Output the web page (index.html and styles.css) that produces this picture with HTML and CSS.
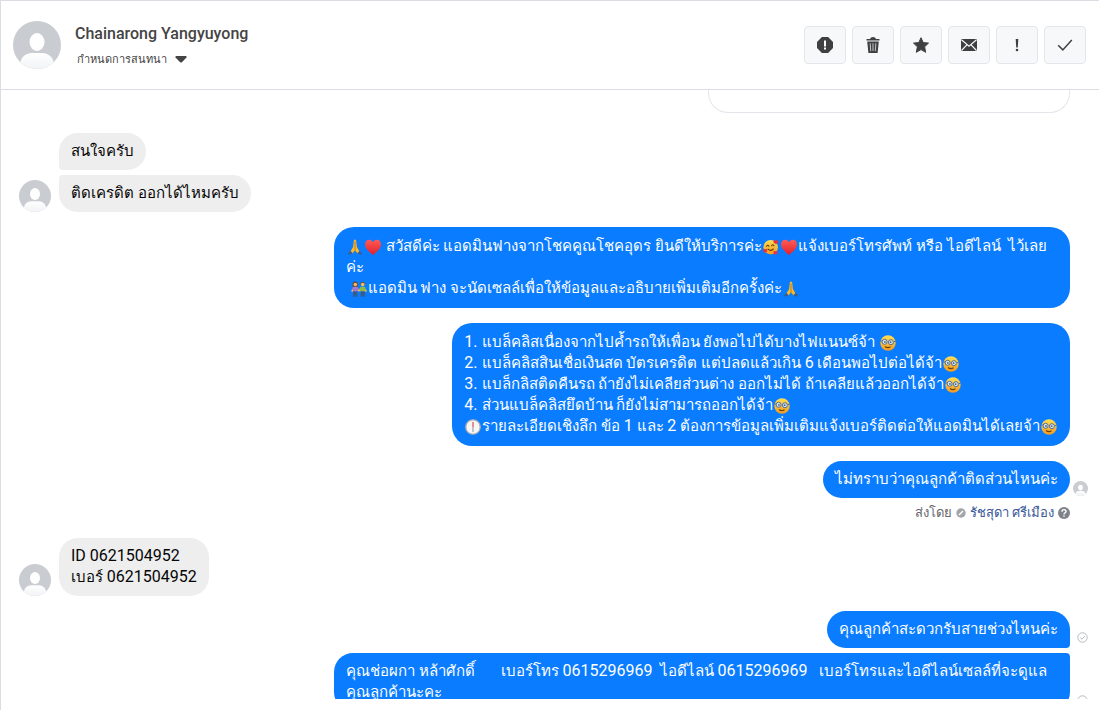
FILE: index.html
```html
<!DOCTYPE html>
<html lang="th">
<head>
    <meta charset="UTF-8">
    <meta name="viewport" content="width=device-width, initial-scale=1.0">
    <title>Chainarong Yangyuyong</title>
    <link rel="stylesheet" href="styles.css">
</head>
<body>
    <!-- Shared symbols -->
    <svg class="sprites" aria-hidden="true">
        <defs>
            <linearGradient id="shade" x1="0" y1="0" x2="0" y2="1">
                <stop offset="0" stop-color="#fff"/>
                <stop offset="1" stop-color="#f1f3f6"/>
            </linearGradient>
            <clipPath id="round"><circle cx="24" cy="24" r="24"/></clipPath>
            <linearGradient id="face" x1="0" y1="0" x2="0" y2="1">
                <stop offset="0" stop-color="#ffdf55"/>
                <stop offset="1" stop-color="#f29a1f"/>
            </linearGradient>
            <linearGradient id="red" x1="0" y1="0" x2="0" y2="1">
                <stop offset="0" stop-color="#ff5b55"/>
                <stop offset="1" stop-color="#e0202b"/>
            </linearGradient>
        </defs>
        <symbol id="person" viewBox="0 0 48 48">
            <g clip-path="url(#round)">
                <rect width="48" height="48" fill="#c9ccd1"/>
                <ellipse cx="24" cy="21" rx="7.5" ry="9" fill="#fff"/>
                <path d="M7 48v-3c0-8 5-13 12-13h10c7 0 12 5 12 13v3z" fill="url(#shade)"/>
            </g>
        </symbol>
        <symbol id="pray" viewBox="0 0 16 16">
            <path d="M8 .5c-.9 0-1.200.8-1.300 2.300L6.100 8 3.400 12.500l2 1.900L8 11.300l2.600 3.100 2-1.900L9.900 8l-.6-5.200C9.200 1.300 8.900.5 8 .5z" fill="#fbb829"/>
            <path d="M8 2.500v9" stroke="#b9791b" stroke-width=".9"/>
            <path d="M3.500 12L.8 14.300l1.600 1.500 3.400-1.500zM12.500 12l2.700 2.300-1.600 1.500-3.400-1.500z" fill="#3c5f8c"/>
        </symbol>
        <symbol id="heart" viewBox="0 0 16 16">
            <path d="M8 16C5 13.500 0 9.800 0 5.300 0 2.600 1.900.8 4.100.8 5.900.8 7.300 1.900 8 3.300 8.700 1.900 10.100.8 11.900.8 14.100.8 16 2.600 16 5.300 16 9.800 11 13.500 8 16z" fill="url(#red)"/>
        </symbol>
        <symbol id="love" viewBox="0 0 16 16">
            <circle cx="7.700" cy="8.200" r="7.300" fill="url(#face)"/>
            <path d="M3.600 7.200q1.200-1.800 2.400 0M8.600 6.700q1.200-1.800 2.400 0M5 10.200q2.700 2.500 5.300-.2" stroke="#6b3a12" stroke-width="1.100" fill="none" stroke-linecap="round"/>
            <path d="M13 5.200c-1.800-.8-2.900-1.800-2.600-3.100.3-1.100 1.600-1.300 2.300-.4.900-.9 2.300-.5 2.500.7.200 1.300-.8 2.200-2.200 2.800zM2.400 13.800C1 13-.1 12.100.1 10.900c.2-1 1.400-1.200 2-.4.800-.8 2.100-.4 2.200.6.100 1.200-.7 2-1.900 2.700zM12.600 15.800c-1.500-.8-2.500-1.700-2.200-2.900.2-1 1.400-1.200 2-.4.800-.8 2.100-.4 2.200.6.100 1.200-.8 2.100-2 2.700z" fill="#e8323c"/>
        </symbol>
        <symbol id="nerd" viewBox="0 0 16 16">
            <circle cx="8" cy="8" r="7.700" fill="url(#face)"/>
            <path d="M.5 6h1.500M14 6.500h1.500" stroke="#4f6e91" stroke-width="1"/>
            <circle cx="4.600" cy="6.800" r="2.500" fill="#dbe6f0" stroke="#4f6e91" stroke-width="1"/>
            <circle cx="10.900" cy="7.200" r="2.500" fill="#dbe6f0" stroke="#4f6e91" stroke-width="1"/>
            <circle cx="4.900" cy="6.900" r=".9" fill="#3f5f86"/>
            <circle cx="10.600" cy="7.200" r=".9" fill="#3f5f86"/>
            <path d="M5 11.500q2.800 2.200 5.500.2" stroke="#71400f" stroke-width="1.200" fill="none"/>
        </symbol>
        <symbol id="couple" viewBox="0 0 16 16">
            <path d="M1.700 6V3C1.700-.3 6.700-.3 6.700 3v3z" fill="#684326"/>
            <circle cx="4.300" cy="3.500" r="1.800" fill="#f6bd55"/>
            <path d="M9.400 3C9.400 0 14 0 14 3v1H9.400z" fill="#705032"/>
            <circle cx="11.700" cy="3.600" r="1.800" fill="#f6bd55"/>
            <path d="M2 5.700h4.600L8 8.500l-1.300 2H2L.4 9.600z" fill="#a17ac9"/>
            <path d="M9.500 5.700h4.300l1.900 3.900-1.800.9H9.500L8 8.500z" fill="#8eb94b"/>
            <path d="M7 8.800h2v1.400H7zM.5 9h1.400v1.700H.5zM14.200 9h1.400v1.700h-1.400z" fill="#f6bd55"/>
            <path d="M2.200 10.500h4v5.300H4.700l-.4-3.600-.4 3.600H2.200zM9.800 10.500h4v5.300h-1.600l-.4-3.600-.4 3.600H9.800z" fill="#40577c"/>
        </symbol>
        <symbol id="clock" viewBox="0 0 16 16">
            <circle cx="8" cy="8" r="7.200" fill="#f6f6f7" stroke="#b5b1b1" stroke-width="1.300"/>
            <path d="M8 3v5" stroke="#e45757" stroke-width="1.300"/>
            <path d="M8 8v5" stroke="#8a8f98" stroke-width="1"/>
        </symbol>
        <symbol id="sent" viewBox="0 0 11 11">
            <circle cx="5.500" cy="5.500" r="4.700" fill="none" stroke="#b7bac0" stroke-width="1"/>
            <path d="M3.300 5.700l1.600 1.500 3-3.200" fill="none" stroke="#b7bac0" stroke-width="1"/>
        </symbol>
    </svg>

    <header class="header">
        <svg class="avatar avatar-large"><use href="#person"/></svg>
        <div class="contact">
            <h1>Chainarong Yangyuyong</h1>
            <button class="assign" type="button">กำหนดการสนทนา<svg width="12" height="7" viewBox="0 0 12 7"><path d="M1 0h10q1 .5.500 1.500L6.900 6.200q-.9.800-1.800 0L.5 1.500Q0 .5 1 0z" fill="#444"/></svg></button>
        </div>
        <div class="actions">
            <button type="button" aria-label="รายงาน">
                <svg viewBox="0 0 16 16"><path d="M4.900 0h6.200L16 4.900v6.200L11.100 16H4.900L0 11.100V4.900z" fill="#3e4042"/><path d="M7 3.500h2v6H7zM7 10.600h2v2H7z" fill="#fff"/></svg>
            </button>
            <button type="button" aria-label="ลบ">
                <svg viewBox="0 0 16 16"><path d="M5 2Q5.500 0 8 0t3 2h3.500v1.500h-13V2z" fill="#3e4042"/><path d="M2.200 4.500h11.600L12.600 16H3.400z" fill="#3e4042"/><path d="M5.200 6.300l.5 7.800M8 6.300v7.800M10.800 6.300l-.5 7.800" stroke="#b9bbbd" stroke-width="1.100"/></svg>
            </button>
            <button type="button" aria-label="ติดดาว">
                <svg viewBox="0 0 16 16"><path d="M8 .7l2.200 4.900 5.300.5-3.900 3.700 1.100 5.500L8 12.600l-4.700 2.700 1.100-5.500L.5 6.100l5.300-.5z" fill="#3e4042" stroke="#3e4042" stroke-linejoin="round"/></svg>
            </button>
            <button type="button" aria-label="ยังไม่อ่าน">
                <svg viewBox="0 0 16 16"><rect y="2" width="16" height="12" rx="1" fill="#3e4042"/><path d="M.5 2.800L8 9.200l7.500-6.400M.5 13.500l5.400-5.700M15.500 13.500l-5.400-5.700" fill="none" stroke="#f7f8fa" stroke-width="1.200"/></svg>
            </button>
            <button type="button" aria-label="ติดตาม">
                <svg viewBox="0 0 16 16"><path d="M6.700 2h2.600l-.5 8.500H7.200z" fill="#3e4042"/><circle cx="8" cy="13" r="1.300" fill="#3e4042"/></svg>
            </button>
            <button type="button" aria-label="เสร็จสิ้น">
                <svg viewBox="0 0 16 16"><path d="M1.200 8.300l4.600 4.600L14.800 3" fill="none" stroke="#3e4042" stroke-width="1.500"/></svg>
            </button>
        </div>
    </header>

    <main class="thread">
        <div class="row row-out"><div class="card"></div><div class="receipt"></div></div>

        <section class="group">
            <div class="row">
                <div class="avatar"></div>
                <div class="bubble in first">สนใจครับ</div>
            </div>
            <div class="row">
                <svg class="avatar"><use href="#person"/></svg>
                <div class="bubble in last">ติดเครดิต ออกได้ไหมครับ</div>
            </div>
        </section>

        <section class="group">
            <div class="row row-out">
                <div class="bubble out long"><svg class="emoji"><use href="#pray"/></svg><svg class="emoji"><use href="#heart"/></svg> สวัสดีค่ะ แอดมินฟางจากโชคคูณโชคอุดร ยินดีให้บริการค่ะ<svg class="emoji"><use href="#love"/></svg><svg class="emoji"><use href="#heart"/></svg>แจ้งเบอร์โทรศัพท์ หรือ ไอดีไลน์&nbsp; ไว้เลยค่ะ<br>&nbsp;<svg class="emoji"><use href="#couple"/></svg>แอดมิน ฟาง จะนัดเซลล์เพื่อให้ข้อมูลและอธิบายเพิ่มเติมอีกครั้งค่ะ<svg class="emoji"><use href="#pray"/></svg></div>
                <div class="receipt"></div>
            </div>
        </section>

        <section class="group">
            <div class="row row-out">
                <div class="bubble out long"><span class="num">1. </span>แบล็คลิสเนื่องจากไปค้ำรถให้เพื่อน ยังพอไปได้บางไฟแนนซ์จ้า <svg class="emoji"><use href="#nerd"/></svg><br><span class="num">2. </span>แบล็คลิสสินเชื่อเงินสด บัตรเครดิต แต่ปลดแล้วเกิน <span class="num">6</span> เดือนพอไปต่อได้จ้า<svg class="emoji"><use href="#nerd"/></svg><br><span class="num">3. </span>แบล็กลิสติดคืนรถ ถ้ายังไม่เคลียส่วนต่าง ออกไม่ได้ ถ้าเคลียแล้วออกได้จ้า<svg class="emoji"><use href="#nerd"/></svg><br><span class="num">4. </span>ส่วนแบล็คลิสยึดบ้าน ก็ยังไม่สามารถออกได้จ้า<svg class="emoji"><use href="#nerd"/></svg><br><svg class="emoji"><use href="#clock"/></svg>รายละเอียดเชิงลึก ข้อ <span class="num">1</span> และ <span class="num">2</span> ต้องการข้อมูลเพิ่มเติมแจ้งเบอร์ติดต่อให้แอดมินได้เลยจ้า<svg class="emoji"><use href="#nerd"/></svg></div>
                <div class="receipt"></div>
            </div>
        </section>

        <section class="group">
            <div class="row row-out">
                <div class="bubble out">ไม่ทราบว่าคุณลูกค้าติดส่วนไหนค่ะ</div>
                <div class="receipt seen"><svg class="seen-icon"><use href="#person"/></svg></div>
            </div>
            <div class="sender">
                <span>ส่งโดย</span>
                <svg width="10" height="10" viewBox="0 0 10 10"><circle cx="5" cy="5" r="4.700" fill="#a3a5a8"/><path d="M3 7l4-4" stroke="#fff" stroke-width="1.500"/></svg>
                <a href="#">รัชสุดา ศรีเมือง</a>
                <svg width="12" height="12" viewBox="0 0 12 12"><circle cx="6" cy="6" r="6" fill="#7f8389"/><path d="M4 4.700C4 2 8 2 8 4.500 8 5.900 6 5.700 6 7.500" fill="none" stroke="#fff" stroke-width="1.400"/><path d="M5.300 8.400h1.400v1.400H5.300z" fill="#fff"/></svg>
            </div>
        </section>

        <section class="group">
            <div class="row">
                <svg class="avatar"><use href="#person"/></svg>
                <div class="bubble in"><span class="num">ID 0621504952</span><br>เบอร์ <span class="num">0621504952</span></div>
            </div>
        </section>

        <section class="group">
            <div class="row row-out">
                <div class="bubble out first">คุณลูกค้าสะดวกรับสายช่วงไหนค่ะ</div>
                <div class="receipt"><svg class="sent-icon"><use href="#sent"/></svg></div>
            </div>
            <div class="row row-out">
                <div class="bubble out last">คุณช่อผกา หล้าศักดิ์ &nbsp; &nbsp; &nbsp; เบอร์โทร <span class="num">0615296969</span>&nbsp; ไอดีไลน์ <span class="num">0615296969</span> &nbsp; เบอร์โทรและไอดีไลน์เซลล์ที่จะดูแลคุณลูกค้านะคะ</div>
                <div class="receipt"><svg class="sent-icon"><use href="#sent"/></svg></div>
            </div>
        </section>
    </main>
</body>
</html>
```
FILE: styles.css
```css
* {
    box-sizing: border-box;
}
body {
    display: flex;
    flex-direction: column;
    height: 100vh;
    margin: 0;
    padding-bottom: 11px;
    border-top: 1px solid #dadde1;
    border-left: 1px solid #dadde1;
    background-color: #fff;
    color: #050505;
    font-family: Roboto, "Noto Sans", sans-serif;
    font-size: 15px;
    line-height: 21px;
    overflow: hidden;
}
button {
    font-family: inherit;
    cursor: pointer;
}
.sprites {
    position: absolute;
    width: 0;
    height: 0;
}

/* Header */
.header {
    display: flex;
    flex: none;
    align-items: center;
    padding: 20px 13px 20px 12px;
    border-bottom: 1px solid #dadde1;
}
.avatar {
    flex: none;
    width: 32px;
    height: 32px;
}
.avatar-large {
    width: 48px;
    height: 48px;
}
.contact {
    flex: 1;
    padding-left: 14px;
}
h1 {
    margin: 0 0 8px;
    color: #444;
    font-size: 16px;
    font-weight: 500;
}
.assign {
    display: flex;
    align-items: center;
    gap: 8px;
    padding: 0 2px;
    border: none;
    background: none;
    color: #444;
    font-size: 11px;
    line-height: 16px;
}
.actions {
    display: flex;
    gap: 6px;
}
.actions button {
    display: flex;
    align-items: center;
    justify-content: center;
    width: 42px;
    height: 38px;
    padding: 0;
    border: 1px solid #e4e6eb;
    border-radius: 4px;
    background-color: #f7f8fa;
}
.actions svg {
    width: 16px;
    height: 16px;
}

/* Messages */
.thread {
    flex: 1;
    min-height: 0;
    overflow: hidden;
}
.card {
    width: 362px;
    height: 23px;
    border: 1px solid #e4e6eb;
    border-top: none;
    border-radius: 0 0 20px 20px;
}
.group {
    display: flex;
    flex-direction: column;
    gap: 5px;
    margin-bottom: 15px;
}
.card, .receipt {
    flex: none;
}
.row {
    display: flex;
    align-items: flex-end;
    gap: 8px;
    padding-left: 18px;
}
.row-out {
    justify-content: flex-end;
    gap: 0;
}
.row-out + .group {
    margin-top: 20px;
}
.bubble {
    max-width: 736px;
    padding: 8px 12px;
    border-radius: 19px;
}
.in {
    background-color: #eee;
}
.out {
    background-color: #0a7cff;
    color: #fff;
}
.long {
    padding: 9px 12px;
    border-radius: 20px;
}
.in.first {
    border-bottom-left-radius: 4px;
}
.in.last {
    border-top-left-radius: 4px;
}
.out.first {
    border-bottom-right-radius: 4px;
}
.out.last {
    border-top-right-radius: 4px;
}
.num {
    font-size: 16px;
    line-height: 16px;
}
.emoji {
    width: 16px;
    height: 16px;
    margin: 0 1px;
    vertical-align: -4px;
}
.receipt {
    display: flex;
    justify-content: flex-end;
    width: 29px;
    padding: 0 11px 5px 0;
}
.receipt.seen {
    padding-bottom: 2px;
}
.seen-icon {
    width: 15px;
    height: 15px;
}
.sent-icon {
    width: 11px;
    height: 11px;
}
.sender {
    display: flex;
    align-items: center;
    justify-content: flex-end;
    gap: 4px;
    padding-right: 29px;
    color: #65676b;
    font-size: 13px;
    line-height: 20px;
}
.sender a {
    color: #385898;
    text-decoration: none;
}
```
